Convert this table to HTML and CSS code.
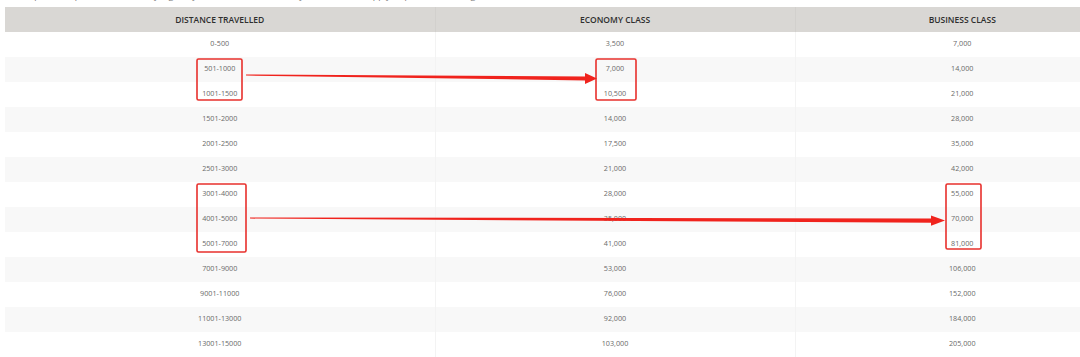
FILE: index.html
```html
<!DOCTYPE html>
<html>
<head>
<meta charset="utf-8">
<link rel="stylesheet" href="styles.css">
</head>
<body>
<div class="page">
  <div class="caption"><p>Award points required for a one-way flight, by distance travelled and by class of travel, apply as per the following table</p></div>
  <table class="award">
    <colgroup><col class="c1"><col class="c2"><col class="c3"></colgroup>
    <thead>
      <tr><th>DISTANCE TRAVELLED</th><th>ECONOMY CLASS</th><th>BUSINESS CLASS</th></tr>
    </thead>
    <tbody>
      <tr><td>0-500</td><td>3,500</td><td>7,000</td></tr>
      <tr><td>501-1000</td><td>7,000</td><td>14,000</td></tr>
      <tr><td>1001-1500</td><td>10,500</td><td>21,000</td></tr>
      <tr><td>1501-2000</td><td>14,000</td><td>28,000</td></tr>
      <tr><td>2001-2500</td><td>17,500</td><td>35,000</td></tr>
      <tr><td>2501-3000</td><td>21,000</td><td>42,000</td></tr>
      <tr><td>3001-4000</td><td>28,000</td><td>55,000</td></tr>
      <tr><td>4001-5000</td><td>35,000</td><td>70,000</td></tr>
      <tr><td>5001-7000</td><td>41,000</td><td>81,000</td></tr>
      <tr><td>7001-9000</td><td>53,000</td><td>106,000</td></tr>
      <tr><td>9001-11000</td><td>76,000</td><td>152,000</td></tr>
      <tr><td>11001-13000</td><td>92,000</td><td>184,000</td></tr>
      <tr><td>13001-15000</td><td>103,000</td><td>205,000</td></tr>
    </tbody>
  </table>
  <svg class="marks" width="1080" height="357" viewBox="0 0 1080 357">
    <g fill="none" stroke="#e8302c" stroke-width="1.6">
      <rect x="197" y="59" width="45" height="41" rx="1.5"/>
      <rect x="596" y="59" width="40" height="41" rx="1.5"/>
      <rect x="197" y="184" width="49" height="68" rx="1.5"/>
      <rect x="946" y="184" width="35" height="65" rx="1.5"/>
    </g>
    <g fill="#f0231d">
      <polygon points="246,74.4 586,76.6 586,80.4 246,75.6"/>
      <polygon points="585,73 597,78.5 585,84"/>
      <polygon points="250,217.4 933,218.4 933,222.8 250,218.6"/>
      <polygon points="931,215.5 945,220.6 931,225.7"/>
    </g>
  </svg>
</div>
</body>
</html>
```

FILE: styles.css
```css
html, body {
  margin: 0;
  padding: 0;
  background: #ffffff;
}
body {
  overflow: hidden;
  font-family: "Open Sans", "Liberation Sans", sans-serif;
}
.page {
  position: relative;
  width: 1080px;
  height: 357px;
  overflow: hidden;
}
.caption {
  height: 7px;
  overflow: hidden;
  padding-left: 5px;
}
.caption p {
  margin: -10px 0 0 0;
  font-size: 9px;
  line-height: 12px;
  color: #777;
  white-space: nowrap;
}
.award {
  margin-left: 5px;
  border-collapse: collapse;
  table-layout: fixed;
  width: 1075px;
}
.c1 { width: 430px; }
.c2 { width: 360px; }
.c3 { width: 285px; }
.award th {
  height: 25px;
  padding: 0;
  background: #d9d7d4;
  color: #2e2e2e;
  font-size: 8.5px;
  font-weight: 600;
  text-align: center;
  border-left: 1px solid #d2d0cd;
}
.award td {
  height: 22px;
  padding: 0 0 3px 0;
  color: #6a6a6a;
  font-size: 7.2px;
  text-align: center;
  border-left: 1px solid #f3f3f3;
}
.award th:first-child,
.award td:first-child {
  border-left: none;
}
.award th:last-child,
.award td:last-child {
  padding-left: 49px;
}
.award tbody tr:nth-child(even) td {
  background: #f8f8f8;
}
.marks {
  position: absolute;
  left: 0;
  top: 0;
  pointer-events: none;
}
```
